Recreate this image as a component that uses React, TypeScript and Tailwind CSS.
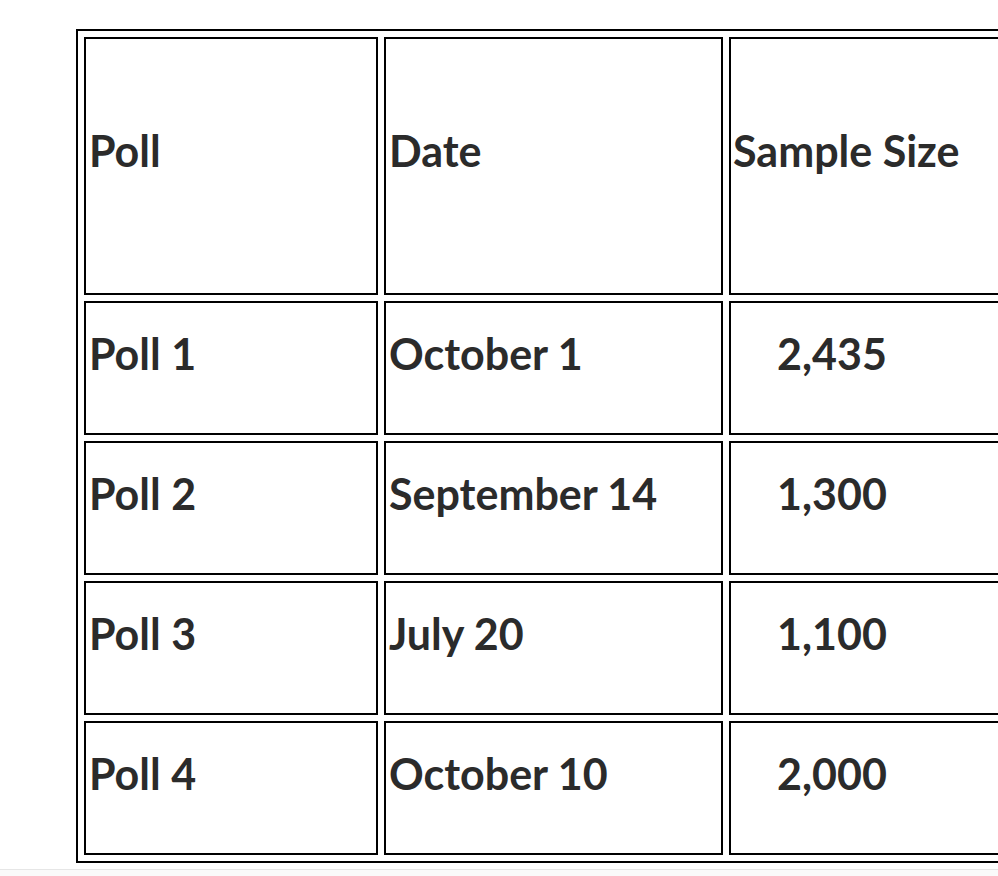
import React from "react";

const rows = [
  { poll: "Poll 1", date: "October 1", size: "2,435" },
  { poll: "Poll 2", date: "September 14", size: "1,300" },
  { poll: "Poll 3", date: "July 20", size: "1,100" },
  { poll: "Poll 4", date: "October 10", size: "2,000" },
];

export default function App() {
  return (
    <div
      className="w-[998px] h-[876px] overflow-hidden bg-white flex flex-col text-[#2b2b2b]"
      style={{ fontFamily: "Lato, 'Open Sans', sans-serif" }}
    >
      <div className="h-[869px] shrink-0 pt-[29px] pl-[76px] overflow-hidden">
        <table className="table-fixed border-separate border-spacing-[6px] border-2 border-black w-[1090px] text-[43px] font-bold leading-[48px]">
          <colgroup>
            <col className="w-[294px]" />
            <col className="w-[339px]" />
            <col className="w-[445px]" />
          </colgroup>
          <thead>
            <tr>
              <th className="border-2 border-black p-0 text-left align-top font-bold">
                <div className="h-[254px] pt-[88px] pl-[3px]">Poll</div>
              </th>
              <th className="border-2 border-black p-0 text-left align-top font-bold">
                <div className="h-[254px] pt-[88px] pl-[3px]">Date</div>
              </th>
              <th className="border-2 border-black p-0 text-left align-top font-bold">
                <div className="h-[254px] pt-[88px] pl-[2px]">Sample Size</div>
              </th>
            </tr>
          </thead>
          <tbody>
            {rows.map((r) => (
              <tr key={r.poll}>
                <td className="border-2 border-black p-0 align-top">
                  <div className="h-[130px] pt-[27px] pl-[3px]">{r.poll}</div>
                </td>
                <td className="border-2 border-black p-0 align-top">
                  <div className="h-[130px] pt-[27px] pl-[3px]">{r.date}</div>
                </td>
                <td className="border-2 border-black p-0 align-top">
                  <div className="h-[130px] pt-[27px] pl-[46px]">{r.size}</div>
                </td>
              </tr>
            ))}
          </tbody>
        </table>
      </div>
      <div className="flex-1 border-t border-[#e6e6e6] bg-[#fafafa]" />
    </div>
  );
}
